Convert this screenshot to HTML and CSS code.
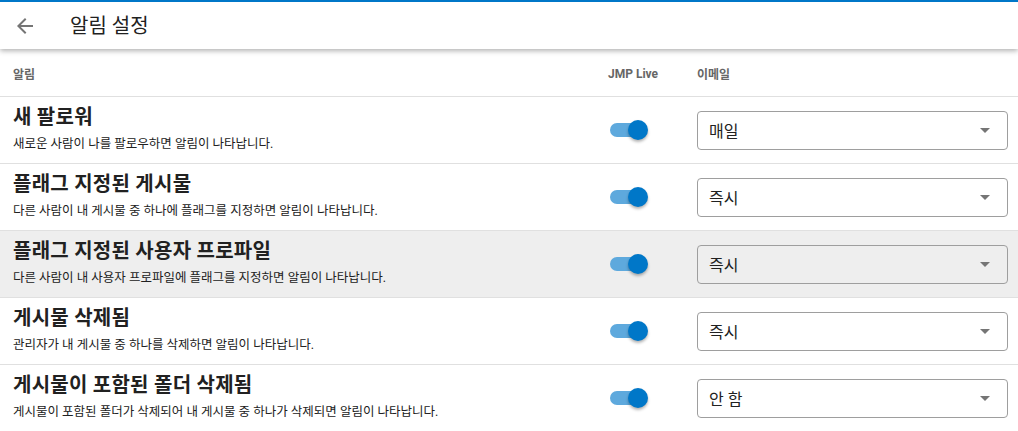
FILE: index.html
```html
<!DOCTYPE html>
<html lang="ko">
<head>
<meta charset="utf-8">
<link rel="stylesheet" href="styles.css">
</head>
<body>
<header class="appbar">
  <button class="back" aria-label="뒤로">
    <svg width="24" height="24" viewBox="0 0 24 24"><path d="M20 11H7.83l5.59-5.59L12 4l-8 8 8 8 1.41-1.41L7.83 13H20v-2z" fill="#757575"/></svg>
  </button>
  <h1 class="title">알림 설정</h1>
</header>
<main class="table">
  <div class="row head">
    <div class="c1">알림</div>
    <div class="c2">JMP Live</div>
    <div class="c3">이메일</div>
  </div>
  <div class="row">
    <div class="c1"><div class="name">새 팔로워</div><div class="desc">새로운 사람이 나를 팔로우하면 알림이 나타납니다.</div></div>
    <div class="c2"><span class="toggle"><span class="thumb"></span></span></div>
    <div class="c3"><div class="select"><span>매일</span><i class="caret"></i></div></div>
  </div>
  <div class="row">
    <div class="c1"><div class="name">플래그 지정된 게시물</div><div class="desc">다른 사람이 내 게시물 중 하나에 플래그를 지정하면 알림이 나타납니다.</div></div>
    <div class="c2"><span class="toggle"><span class="thumb"></span></span></div>
    <div class="c3"><div class="select"><span>즉시</span><i class="caret"></i></div></div>
  </div>
  <div class="row hover">
    <div class="c1"><div class="name">플래그 지정된 사용자 프로파일</div><div class="desc">다른 사람이 내 사용자 프로파일에 플래그를 지정하면 알림이 나타납니다.</div></div>
    <div class="c2"><span class="toggle"><span class="thumb"></span></span></div>
    <div class="c3"><div class="select"><span>즉시</span><i class="caret"></i></div></div>
  </div>
  <div class="row">
    <div class="c1"><div class="name">게시물 삭제됨</div><div class="desc">관리자가 내 게시물 중 하나를 삭제하면 알림이 나타납니다.</div></div>
    <div class="c2"><span class="toggle"><span class="thumb"></span></span></div>
    <div class="c3"><div class="select"><span>즉시</span><i class="caret"></i></div></div>
  </div>
  <div class="row">
    <div class="c1"><div class="name">게시물이 포함된 폴더 삭제됨</div><div class="desc">게시물이 포함된 폴더가 삭제되어 내 게시물 중 하나가 삭제되면 알림이 나타납니다.</div></div>
    <div class="c2"><span class="toggle"><span class="thumb"></span></span></div>
    <div class="c3"><div class="select"><span>안 함</span><i class="caret"></i></div></div>
  </div>
</main>
</body>
</html>
```
FILE: styles.css
```css
* { box-sizing: border-box; }
html, body { margin: 0; padding: 0; background: #fff; }
body {
  font-family: Roboto, "Noto Sans CJK KR", sans-serif;
  color: #212121;
  overflow: hidden;
}
.appbar {
  height: 49px;
  border-top: 2px solid #0077c8;
  display: flex;
  align-items: center;
  padding-left: 13px;
  background: #fff;
  box-shadow: 0 2px 5px rgba(0,0,0,0.3);
  position: relative;
  z-index: 1;
}
.back {
  border: 0; background: none; padding: 0; margin: 0;
  width: 24px; height: 24px; display: flex;
}
.title {
  margin: 0 0 0 33px;
  font-size: 20px;
  font-weight: 400;
  color: #212121;
  line-height: 24px;
}
.row {
  display: grid;
  grid-template-columns: 1fr 89px 311px;
  padding: 0 10px 0 13px;
  height: 67px;
  border-top: 1px solid #e0e0e0;
  align-items: center;
}
.row.head {
  height: 47px;
  border-top: 0;
  font-size: 12px;
  font-weight: 700;
  color: #666;
  padding-top: 2px;
}
.row.hover { background: #eeeeee; }
.name {
  font-size: 20px;
  font-weight: 700;
  letter-spacing: 0.25px;
  line-height: 24px;
  color: #212121;
  margin-top: -3px;
}
.desc {
  font-size: 12.5px;
  line-height: 16px;
  margin-top: 7px;
  color: #212121;
}
.toggle {
  display: block;
  position: relative;
  width: 36px;
  height: 14px;
  margin-left: 2px;
  border-radius: 7px;
  background: #5ea9dd;
}
.thumb {
  position: absolute;
  right: -2px; top: -3px;
  width: 20px; height: 20px;
  border-radius: 50%;
  background: #0077c8;
  box-shadow: 0 2px 3px rgba(0,0,0,0.3);
}
.select {
  height: 39px;
  border: 1px solid #9e9e9e;
  border-radius: 4px;
  display: flex;
  align-items: center;
  justify-content: space-between;
  padding: 0 17px 0 11px;
  font-size: 16px;
  color: #212121;
  background: transparent;
}
.caret {
  width: 0; height: 0;
  border-left: 5px solid transparent;
  border-right: 5px solid transparent;
  border-top: 5px solid #757575;
}
```
